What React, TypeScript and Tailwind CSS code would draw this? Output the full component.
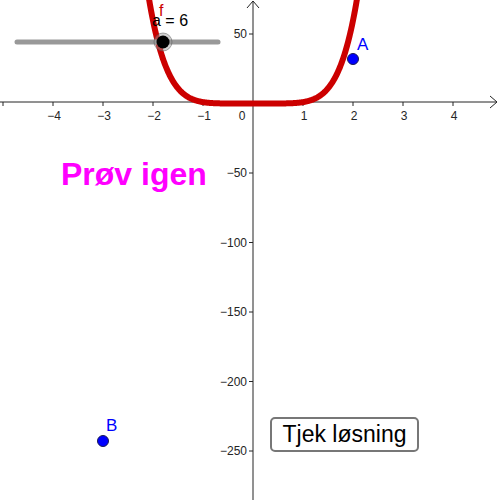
const OX = 253;
const OY = 103.5;
const SX = 50;
const SY = 1.39;

const px = (x: number) => OX + x * SX;
const py = (y: number) => OY - y * SY;

function curvePoints() {
  const pts: string[] = [];
  for (let x = -2.3; x <= 2.3001; x += 0.01) {
    pts.push(`${px(x).toFixed(2)},${py(Math.pow(Math.abs(x), 5.9)).toFixed(2)}`);
  }
  return pts.join(' ');
}

const xTicks = [-5, -4, -3, -2, -1, 1, 2, 3, 4];
const yTicks = [50, -50, -100, -150, -200, -250];

export default function App() {
  return (
    <div className="relative w-[500px] h-[500px] bg-white overflow-hidden" style={{ fontFamily: '"Liberation Sans", Arial, sans-serif' }}>
      <svg width="500" height="500" className="absolute inset-0">
        {/* axes */}
        <line x1="0" y1={OY - 1.5} x2="497" y2={OY - 1.5} stroke="#252525" strokeWidth="1" />
        <polyline points={`490,${OY - 7.5} 497,${OY - 1.5} 490,${OY + 4.5}`} fill="none" stroke="#252525" strokeWidth="1" />
        <line x1={OX} y1="1" x2={OX} y2="500" stroke="#252525" strokeWidth="1" />
        <polyline points={`${OX - 6},8 ${OX},1 ${OX + 6},8`} fill="none" stroke="#252525" strokeWidth="1" />

        {xTicks.map((t) => (
          <line key={t} x1={px(t)} y1={OY - 1.5} x2={px(t)} y2={OY + 2.5} stroke="#252525" strokeWidth="1" />
        ))}
        {xTicks.filter((t) => t !== -5).map((t) => (
          <text key={t} x={px(t) + 1} y={OY + 16} fontSize="12" textAnchor="middle" fill="#252525">
            {t < 0 ? `\u2212${-t}` : t}
          </text>
        ))}
        <text x={OX - 11} y={OY + 16} fontSize="12" textAnchor="middle" fill="#252525">0</text>

        {yTicks.map((t) => (
          <g key={t}>
            <line x1={OX - 4} y1={py(t)} x2={OX} y2={py(t)} stroke="#252525" strokeWidth="1" />
            <text x={OX - 6} y={py(t) + 4} fontSize="12" textAnchor="end" fill="#252525">
              {t < 0 ? `\u2212${-t}` : t}
            </text>
          </g>
        ))}

        {/* function f */}
        <polyline points={curvePoints()} fill="none" stroke="#cc0000" strokeWidth="6" strokeLinejoin="round" />
        <text x="159" y="16" fontSize="16" fill="#cc0000">f</text>

        {/* slider */}
        <line x1="17" y1="42" x2="218" y2="42" stroke="#999999" strokeWidth="5" strokeLinecap="round" />
        <circle cx="163" cy="42" r="9" fill="#999999" fillOpacity="0.45" stroke="#555555" strokeOpacity="0.5" strokeWidth="1" />
        <circle cx="163" cy="42" r="6.5" fill="#000000" />
        <text x="152" y="26" fontSize="16" fill="#000000">a = 6</text>

        {/* points */}
        <circle cx={px(2)} cy="59" r="5.5" fill="#0000ff" stroke="#1a1a55" strokeWidth="1" />
        <text x="357" y="50" fontSize="17" fill="#0000ff">A</text>
        <circle cx={px(-3)} cy="441" r="5.5" fill="#0000ff" stroke="#1a1a55" strokeWidth="1" />
        <text x="106" y="431" fontSize="17" fill="#0000ff">B</text>
      </svg>

      <div className="absolute left-[61px] top-[158px] text-[32px] font-bold leading-none text-[#ff00ff]">
        Prøv igen
      </div>

      <button className="absolute left-[270px] top-[417px] w-[149px] h-[35px] border-2 border-[#777777] rounded-[5px] bg-white text-[23px] leading-none text-black flex items-center justify-center">
        Tjek løsning
      </button>
    </div>
  );
}
